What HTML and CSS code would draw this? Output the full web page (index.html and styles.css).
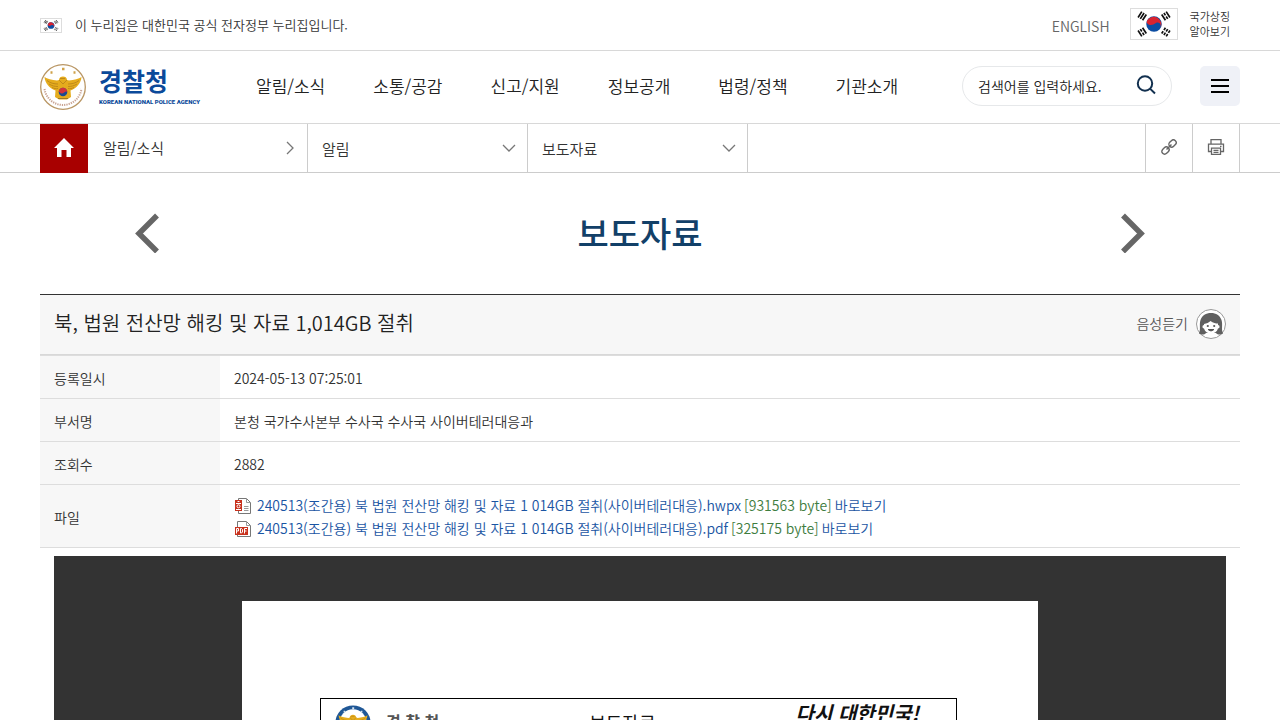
FILE: index.html
```html
<!DOCTYPE html>
<html lang="ko">
<head>
<meta charset="utf-8">
<meta name="viewport" content="width=device-width, initial-scale=1">
<title>보도자료 | 경찰청</title>
<link rel="stylesheet" href="styles.css">
</head>
<body>
<svg class="defs" aria-hidden="true">
  <symbol id="flag" viewBox="0 0 48 32">
    <circle cx="24" cy="16" r="8.300" fill="#0b4da2"/>
    <path d="M17 11.600A8.300 8.300 0 0 1 31 20.400C32 17 30 13 26 15C23 17 19 19 16 14Z" fill="#d8232f"/>
    <g stroke="#111" stroke-width="1.800">
      <path d="M7 9 11 2.800M9.400 10.500 13.400 4.300M11.800 12 15.800 5.800"/>
      <path d="M32.200 5.800 36.200 12M34.600 4.300 36.200 6.800M37 8 38.600 10.500M37 2.800 41 9"/>
      <path d="M7 23 11 29.200M9.400 21.500 11 24M11.800 25.200 13.400 27.700M11.800 20 15.800 26.200"/>
      <path d="M32.200 26.200 33.800 23.700M34.600 22.500 36.200 20M34.600 27.700 36.200 25.200M37 24 38.600 21.500M37 29.200 38.600 26.700M39.400 25.500 41 23"/>
    </g>
  </symbol>
  <symbol id="eagle" viewBox="0 0 46 46">
    <path d="M4.500 13C7 15 12 16 17 16.500L19 16C19 13.500 21 12.500 23 12.500C25 12.500 27 13.500 27 16L29 16.500C34 16 39 15 41.500 13C41 19 37 24 30.500 26.500L31 33L27 35.500H19L15 33L15.500 26.500C9 24 5 19 4.500 13Z" fill="#e5ac1d"/>
    <path d="M7 16.500C10 19 14 20 18 20M9 20C12 22 15 22.500 18 22.500M12 23.500C14 24.500 16 25 18 24.500M39 16.500C36 19 32 20 28 20M37 20C34 22 31 22.500 28 22.500M34 23.500C32 24.500 30 25 28 24.500M19 16L23 20L27 16M20 14.500H25" fill="none" stroke="#c08a1a" stroke-width="1"/>
    <circle cx="23" cy="28" r="4.300" fill="#174a93"/>
    <path d="M18.700 28A4.300 4.300 0 0 1 27.300 28C25.500 26 24 30 21.500 29.500C20 29 20 27.500 18.700 28Z" fill="#d2343b"/>
    <path d="M18 34.500H28" stroke="#9c7a25"/>
  </symbol>
  <symbol id="chevron" viewBox="0 0 14 14">
    <path d="M1 4 7 10 13 4" fill="none" stroke="#777" stroke-width="1.300"/>
  </symbol>
</svg>

<div class="topbar">
  <div class="wrap topbar-in">
    <p class="official"><svg class="flag-s" viewBox="0 0 48 32" aria-hidden="true"><use href="#flag"/></svg>이 누리집은 대한민국 공식 전자정부 누리집입니다.</p>
    <div class="top-links">
      <a class="english" href="#">ENGLISH</a>
      <a class="symbol" href="#"><svg class="flag-l" viewBox="0 0 48 32" aria-hidden="true"><use href="#flag"/></svg><span>국가상징<br>알아보기</span></a>
    </div>
  </div>
</div>

<header class="header">
  <div class="wrap header-in">
    <a class="logo" href="#">
      <svg class="emblem" viewBox="0 0 46 46" aria-hidden="true">
        <circle cx="23" cy="23" r="22.300" fill="#fff" stroke="#b99664" stroke-width="1.300"/>
        <path d="M4.500 25A18.700 18.700 0 0 0 41.500 25" fill="none" stroke="#c9a493" stroke-width="2" stroke-dasharray="1.300 1"/>
        <path d="M10.500 8.500H12.500M22 5H24.500M33.500 8.500H35.500" stroke="#d0a24a" stroke-width="2.500"/>
        <use href="#eagle"/>
      </svg>
      <span class="logo-text"><strong>경찰청</strong><span>KOREAN NATIONAL POLICE AGENCY</span></span>
    </a>
    <nav class="nav" aria-label="주 메뉴">
      <a href="#">알림/소식</a><a href="#">소통/공감</a><a href="#">신고/지원</a><a href="#">정보공개</a><a href="#">법령/정책</a><a href="#">기관소개</a>
    </nav>
    <form class="search" role="search">
      <input type="text" aria-label="검색어" placeholder="검색어를 입력하세요.">
      <button type="button" aria-label="검색"><svg width="20" height="20" viewBox="0 0 20 20" fill="none" stroke="#12304f" stroke-width="2"><circle cx="9" cy="8.500" r="7.200"/><path d="M14 13.600 19 18.500"/></svg></button>
    </form>
    <button class="menu" type="button" aria-label="전체메뉴"><svg width="18" height="14" viewBox="0 0 18 14" stroke="#000" stroke-width="2"><path d="M0 1H18M0 7H18M0 13H18"/></svg></button>
  </div>
</header>

<div class="crumbs">
  <div class="wrap crumbs-in">
    <a class="home" href="#" aria-label="홈"><svg width="20" height="20" viewBox="0 0 20 20" fill="#fff"><path d="M10 0 20 10H17V19H12.500V12H7.500V19H3V10H0Z"/></svg></a>
    <a class="crumb crumb-link" href="#">알림/소식<svg class="chev right" aria-hidden="true"><use href="#chevron"/></svg></a>
    <div class="crumb"><select aria-label="2차 메뉴"><option>알림</option></select><svg class="chev" aria-hidden="true"><use href="#chevron"/></svg></div>
    <div class="crumb"><select aria-label="3차 메뉴"><option>보도자료</option></select><svg class="chev" aria-hidden="true"><use href="#chevron"/></svg></div>
    <div class="tools">
      <button type="button" aria-label="주소 복사"><svg width="16" height="16" viewBox="0 0 16 16" fill="none" stroke="#666" stroke-width="1.400"><g transform="rotate(-45 8 8)"><rect x="-1" y="5.200" width="8" height="5.600" rx="2.800"/><rect x="9" y="5.200" width="8" height="5.600" rx="2.800"/><path d="M4.500 8H11.500"/></g></svg></button>
      <button type="button" aria-label="인쇄"><svg width="18" height="16" viewBox="0 0 18 16" fill="none" stroke="#666" stroke-width="1.300"><path d="M4 5V.7H14V5M4 12.500H1.500V5.200H16.500V12.500H14M4.500 9.200H13.500V15.300H4.500ZM6.500 11.300H11.500M6.500 13.300H11.500M13 7.300H14.500"/></svg></button>
    </div>
  </div>
</div>

<main class="wrap main">
  <div class="heading">
    <button type="button" aria-label="이전 메뉴"><svg width="24" height="40" viewBox="0 0 24 40"><path d="M22 2.500 4 20.500 22 38.500" fill="none" stroke="#666" stroke-width="5.500"/></svg></button>
    <h1>보도자료</h1>
    <button type="button" aria-label="다음 메뉴"><svg width="24" height="40" viewBox="0 0 24 40"><path d="M2 2.500 20 20.500 2 38.500" fill="none" stroke="#666" stroke-width="5.500"/></svg></button>
  </div>

  <article class="post">
    <div class="post-head">
      <h2>북, 법원 전산망 해킹 및 자료 1,014GB 절취</h2>
      <button class="listen" type="button"><span>음성듣기</span>
        <svg width="30" height="30" viewBox="0 0 30 30"><circle cx="15" cy="15" r="14.500" fill="#fff" stroke="#999"/><path d="M3 24.500C5 20 3 16 4.500 11C6 6.500 10 4 15 4C20 4 24 6.500 25.500 11C27 16 25 20 27 24.500C25 26 21.500 26 20 24H10C8.500 26 5 26 3 24.500Z" fill="#606060"/><path d="M8 15C10.500 14.500 13 13.500 14.500 12C17 14 20 14.500 22 14.500V16C24 16 24 19.500 22 19.500C21 23 18.500 24.500 15 24.500C11.500 24.500 9 23 8 19.500C6 19.500 6 16 8 16Z" fill="#fff"/><circle cx="11.800" cy="17" r="1.100" fill="#555"/><circle cx="18.200" cy="17" r="1.100" fill="#555"/><path d="M12 20.500Q15 23.500 18 20.500Z" fill="#555" stroke="#555"/></svg>
      </button>
    </div>
    <table class="info">
      <tr><th scope="row">등록일시</th><td>2024-05-13 07:25:01</td></tr>
      <tr><th scope="row">부서명</th><td>본청 국가수사본부 수사국 수사국 사이버테러대응과</td></tr>
      <tr><th scope="row">조회수</th><td>2882</td></tr>
      <tr><th scope="row">파일</th><td>
        <ul class="files">
          <li><svg width="17" height="16" viewBox="0 0 17 16"><path d="M4.500 .5H12.500L16.500 4.500V15.500H4.500Z" fill="#fff" stroke="#777"/><path d="M12.500 .5V4.500H16.500M10 8.500H14.500M10 10.500H14.500M10 12.500H14.500" fill="none" stroke="#999"/><path d="M1 2H8V13H1Z" fill="#c8321e"/><path d="M3.500 3.500H5.500M2 5.500H7M2 11.500H7" stroke="#fff"/><circle cx="4.500" cy="8.300" r="1.500" fill="none" stroke="#fff"/></svg><a href="#">240513(조간용) 북 법원 전산망 해킹 및 자료 1 014GB 절취(사이버테러대응).hwpx</a><span>[931563 byte]</span><a href="#">바로보기</a></li>
          <li><svg width="17" height="16" viewBox="0 0 17 16"><path d="M3.500 .5H12.500L16.500 4.500V15.500H3.500Z" fill="#fff" stroke="#777"/><path d="M12.500 .5V4.500H16.500" fill="none" stroke="#999"/><path d="M1 6H14V14H1Z" fill="#c8321e"/><path d="M2.500 12.500V7.500H4.500V10H2.500M6.500 7.500V12H7.500L8.500 11V8.500L7.500 7.500ZM10.500 12.500V7.500H13M10.500 10H12.500" fill="none" stroke="#fff"/></svg><a href="#">240513(조간용) 북 법원 전산망 해킹 및 자료 1 014GB 절취(사이버테러대응).pdf</a><span>[325175 byte]</span><a href="#">바로보기</a></li>
        </ul>
      </td></tr>
    </table>
    <div class="viewer">
      <div class="sheet">
        <div class="letterhead">
          <div class="agency"><svg width="36" height="36" viewBox="0 0 46 46" aria-hidden="true"><circle cx="23" cy="23" r="22.500" fill="#1f5796"/><circle cx="23" cy="23" r="17.500" fill="#fff"/><path d="M11 8.500H13M22 4H24.500M33 8.500H35" stroke="#d4e2ef" stroke-width="2"/><use href="#eagle"/></svg><strong>경 찰 청</strong></div>
          <span class="doc-type">보도자료</span>
          <em>다시 대한민국!</em>
        </div>
      </div>
    </div>
  </article>
</main>
</body>
</html>
```
FILE: styles.css
```css
* { box-sizing: border-box; }
body {
  margin: 0;
  height: 100vh;
  display: flex;
  flex-direction: column;
  overflow: hidden;
  background: #fff;
  color: #333;
  font: 350 14px/20px "Noto Sans CJK KR", sans-serif;
}
a { color: inherit; text-decoration: none; }
button, input, select { font: inherit; color: inherit; margin: 0; padding: 0; border: 0; background: none; }
button { cursor: pointer; }
h1, h2, p, ul { margin: 0; padding: 0; }
svg { display: block; flex: none; }
.defs { position: absolute; width: 0; height: 0; }
.wrap { width: calc(100% - 80px); max-width: 1200px; margin: 0 auto; }

.topbar { border-bottom: 1px solid #d8d8d8; }
.topbar-in { display: flex; justify-content: space-between; align-items: center; height: 50px; }
.official { display: flex; align-items: center; gap: 13px; font-size: 13px; }
.flag-s { width: 22px; height: 15px; border: 1px solid #ddd; }
.flag-l { width: 48px; height: 32px; border: 1px solid #ddd; }
.top-links { display: flex; align-items: center; gap: 20px; padding-right: 10px; }
.english { color: #666; padding-top: 2px; }
.symbol { display: flex; align-items: center; gap: 12px; font-size: 11px; line-height: 15px; padding-bottom: 3px; }

.header { border-bottom: 1px solid #d8d8d8; }
.header-in { display: flex; align-items: center; height: 72px; padding-bottom: 2px; }
.logo { display: flex; align-items: center; gap: 13px; width: 216px; padding-top: 2px; color: #0b4a9a; }
.emblem { width: 46px; height: 46px; }
.logo-text { display: flex; flex-direction: column; padding-bottom: 2px; white-space: nowrap; }
.logo-text strong { font-size: 25px; line-height: 32px; font-weight: 700; }
.logo-text span { font: 900 6px/12px Roboto, sans-serif; }
.nav { display: flex; gap: 48px; font-size: 17px; line-height: 24px; color: #222; white-space: nowrap; }
.search { display: flex; align-items: center; width: 210px; height: 40px; margin-left: auto; padding: 0 15px; border: 1px solid #e6e8ea; border-radius: 20px; }
.search input { flex: 1; min-width: 0; height: 24px; outline: 0; }
.search input::placeholder { color: #222; opacity: 1; }
.search button { padding-bottom: 2px; }
.menu { display: grid; place-items: center; width: 40px; height: 40px; margin-left: 28px; border-radius: 5px; background: #eff1f7; }

.crumbs { border-bottom: 1px solid #ccc; }
.crumbs-in { display: flex; height: 48px; font-size: 15px; }
.home { display: grid; place-items: center; width: 48px; height: 49px; padding-bottom: 2px; background: #a80000; }
.crumb { display: grid; grid-template-columns: 1fr 14px; align-items: center; width: 220px; padding: 0 11px 0 14px; border-right: 1px solid #ccc; }
.crumb-link { padding: 0 10px 1px 15px; }
.crumb select { grid-area: 1 / 1 / 2 / 3; height: 48px; padding-top: 2px; appearance: none; }
.chev { grid-area: 1 / 2; width: 14px; height: 14px; pointer-events: none; }
.right { transform: rotate(-90deg); }
.tools { display: flex; margin-left: auto; border-right: 1px solid #ccc; }
.tools button { display: grid; place-items: center; width: 47px; border-left: 1px solid #ccc; padding-bottom: 2px; }

.main { flex: 1; min-height: 0; display: flex; flex-direction: column; }
.heading { display: flex; align-items: center; justify-content: space-between; height: 121px; padding: 0 95px 2px; }
h1 { font-size: 34px; line-height: 48px; font-weight: 500; color: #124068; }
.post { flex: 1; min-height: 0; display: flex; flex-direction: column; }
.post-head { display: flex; justify-content: space-between; align-items: center; height: 61px; padding: 0 14px 1px; border-top: 1px solid #333; border-bottom: 1px solid #d8d8d8; background: #f7f7f7; }
h2 { padding-bottom: 2px; font-size: 20px; line-height: 30px; font-weight: 350; color: #222; }
.listen { display: flex; align-items: center; gap: 8px; color: #555; }
.listen span { padding-bottom: 3px; }
.info { width: 100%; border-collapse: collapse; table-layout: fixed; border-top: 1px solid #ddd; }
.info th, .info td { height: 43px; padding: 2px 14px 0; border-bottom: 1px solid #ddd; font-weight: 350; text-align: left; }
.info th { width: 180px; background: #f7f7f7; }
.info tr:last-child > * { height: 63px; }
.files { list-style: none; line-height: 23px; color: #3f7d3f; }
.files li { display: flex; align-items: center; gap: 3px; }
.files svg { margin-right: 3px; }
.files a { color: #1a55a3; }
.viewer { flex: 1; min-height: 0; margin: 8px 14px 0; padding: 45px 188px 0; overflow: hidden; background: #333; }
.sheet { height: 1126px; padding: 97px 81px 0 78px; background: #fff; color: #111; }
.letterhead { display: flex; align-items: flex-start; justify-content: space-between; height: 90px; padding: 6px 37px 0 14px; border: 1px solid #000; }
.agency { display: flex; gap: 15px; }
.agency strong { padding-top: 4px; font-size: 16px; line-height: 24px; color: #555; }
.doc-type { padding: 4px 0 0 10px; font-size: 18px; line-height: 26px; font-weight: 400; }
.letterhead em { font-size: 20px; line-height: 16px; font-weight: 700; }
```
